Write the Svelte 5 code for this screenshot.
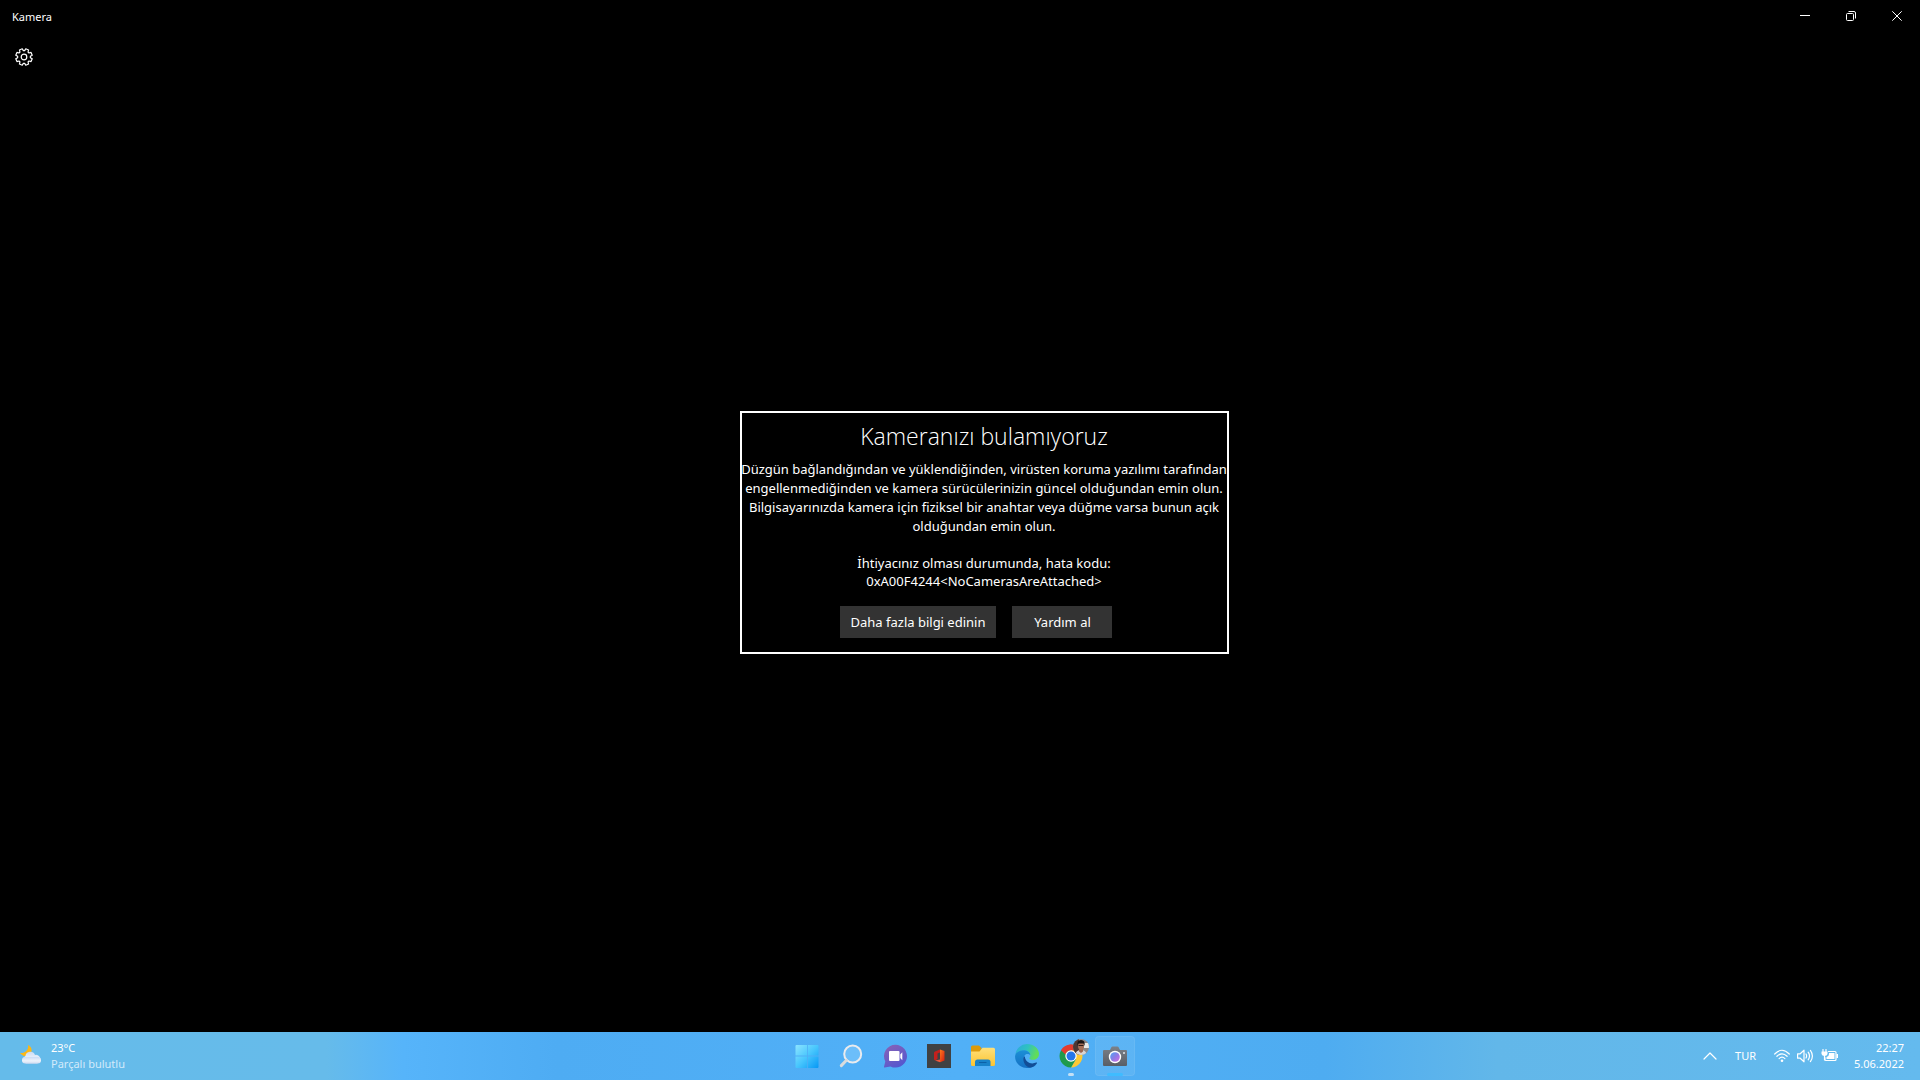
<script>
  const body = [
    'Düzgün bağlandığından ve yüklendiğinden, virüsten koruma yazılımı tarafından',
    'engellenmediğinden ve kamera sürücülerinizin güncel olduğundan emin olun.',
    'Bilgisayarınızda kamera için fiziksel bir anahtar veya düğme varsa bunun açık',
    'olduğundan emin olun.'
  ];
  const code = ['İhtiyacınız olması durumunda, hata kodu:', '0xA00F4244<NoCamerasAreAttached>'];

  // Gear outline: eight teeth, with a notch on every multiple of 45 degrees.
  const point = (radius, degrees) => {
    const a = (degrees * Math.PI) / 180;
    return `${(9 + radius * Math.cos(a)).toFixed(2)},${(9 + radius * Math.sin(a)).toFixed(2)}`;
  };
  const gear = Array.from({ length: 8 }, (_, i) => i * 45)
    .map((a) => [point(6.4, a - 6), point(6.4, a + 6), point(8.4, a + 12), point(8.4, a + 33)].join(' '))
    .join(' ');
</script>

<div class="desktop">
  <header class="titlebar">
    <h1>Kamera</h1>
    <div class="controls">
      <button aria-label="Simge durumuna küçült">
        <svg viewBox="0 0 10 10"><path d="M0 4.5h10" /></svg>
      </button>
      <button aria-label="Önceki boyut">
        <svg viewBox="0 0 10 10"><rect x=".5" y="2.5" width="7" height="7" rx="1" /><path d="M2.5.5H8Q9.5.5 9.5 2v5.5" /></svg>
      </button>
      <button aria-label="Kapat">
        <svg viewBox="0 0 10 10"><path d="M.3.3l9.4 9.4M9.7.3L.3 9.7" /></svg>
      </button>
    </div>
  </header>

  <div class="app">
    <aside>
      <button class="settings" aria-label="Ayarlar">
        <svg viewBox="0 0 18 18">
          <polygon points={gear} />
          <circle cx="9" cy="9" r="2.8" />
        </svg>
      </button>
    </aside>
    <main>
      <section class="dialog" aria-labelledby="error-title">
        <h2 id="error-title">Kameranızı bulamıyoruz</h2>
        <p>{#each body as line}<span>{line}</span>{/each}</p>
        <p>{#each code as line}<span>{line}</span>{/each}</p>
        <div class="actions">
          <button>Daha fazla bilgi edinin</button>
          <button>Yardım al</button>
        </div>
      </section>
    </main>
  </div>

  <footer class="taskbar">
    <button class="weather">
      <svg viewBox="0 0 22 22" width="22" height="22" aria-hidden="true">
        <defs><linearGradient id="cloud" x2="0" y2="1"><stop stop-color="#c9dcf5" /><stop offset=".6" stop-color="#eef3fb" /><stop offset="1" stop-color="#cfdaf0" /></linearGradient></defs>
        <path d="M8 0c5 2 5 9-1 11-3 .6-5-.5-7-3 5 .5 9-3 8-8z" fill="#fdb714" />
        <path d="M6 18.500a4 4 0 0 1-.6-7.400A5 5 0 0 1 15 10a4.300 4.300 0 0 1 2 8.500z" fill="url(#cloud)" />
        <rect x="2" y="12" width="19" height="6.500" rx="3.200" fill="url(#cloud)" />
      </svg>
      <span class="stack"><span>23°C</span><span class="dim">Parçalı bulutlu</span></span>
    </button>

    <nav aria-label="Görev çubuğu">
      <button aria-label="Başlat">
        <svg viewBox="0 0 24 24">
          <defs><linearGradient id="win" x2="1" y2="1"><stop stop-color="#8ce4ff" /><stop offset=".5" stop-color="#48c6fd" /><stop offset="1" stop-color="#0698f5" /></linearGradient></defs>
          <path d="M1.500 1H12v10.500H.5V2q0-1 1-1zM12.800 1H22.500q1 0 1 1v9.500H12.800zM.5 12.500H12V24H1.500q-1 0-1-1zM12.800 12.500h10.700V23q0 1-1 1h-9.700z" fill="url(#win)" />
        </svg>
      </button>
      <button aria-label="Ara">
        <svg viewBox="0 0 24 24">
          <circle cx="13.700" cy="10" r="8.500" fill="#8fd0ff" fill-opacity=".45" stroke="#e9ebee" stroke-width="2" />
          <path d="M7.400 16.300 2.300 21.600" stroke="#d9dbdd" stroke-width="3" stroke-linecap="round" />
        </svg>
      </button>
      <button aria-label="Sohbet">
        <svg viewBox="0 0 24 24">
          <defs><linearGradient id="chat" x2=".6" y2="1"><stop stop-color="#8b62b4" /><stop offset="1" stop-color="#5558cf" /></linearGradient></defs>
          <path d="M12.500.8a11.400 11.400 0 1 1-5 21.600L1.600 23.500Q.8 23.500 1 22.700L2.300 17.500A11.400 11.400 0 0 1 12.500.8z" fill="url(#chat)" />
          <rect x="6" y="7" width="10.500" height="10" rx="1" fill="#fff" />
          <path d="M17.300 10.500 19.300 8.200v8l-2-2.200z" fill="#fff" />
        </svg>
      </button>
      <button aria-label="Office">
        <svg viewBox="0 0 24 24">
          <defs><linearGradient id="office" x2="1" y2="1"><stop stop-color="#ff7a1c" /><stop offset="1" stop-color="#d51b12" /></linearGradient></defs>
          <path d="M0 0h24v24H0z" fill="#404142" />
          <path d="M8 7.500 13 5.500V8.500L10.500 9.500V15L8 16.500 7 15.500V8.500z" fill="#c4201d" />
          <path d="M13 5.500 17.500 7V16.500L13 18.200z" fill="url(#office)" />
          <path d="M8 16.500 13 15.500V18.200z" fill="#f0573b" />
        </svg>
      </button>
      <button aria-label="Dosya Gezgini">
        <svg viewBox="0 0 24 24">
          <defs><linearGradient id="folder" x2="0" y2="1"><stop stop-color="#ffe07a" /><stop offset="1" stop-color="#fbc432" /></linearGradient></defs>
          <path d="M0 3q0-1.500 1.500-1.500H8L10.500 4V8H0z" fill="#dc9a0b" />
          <path d="M0 7.500H8.500L11.500 3.700H22.500Q24 3.700 24 5.200V20.500Q24 22 22.500 22H1.500Q0 22 0 20.500z" fill="url(#folder)" />
          <path d="M4 22V18q0-2.500 2.500-2.500H17q2.500 0 2.500 2.500v4z" fill="#1882ca" />
          <path d="M8 18.500h7.500" stroke="#0c61a8" />
        </svg>
      </button>
      <button aria-label="Microsoft Edge">
        <svg viewBox="0 0 24 24">
          <defs>
            <linearGradient id="edge1" x2="1" y2=".3"><stop stop-color="#29a8e0" /><stop offset=".55" stop-color="#2fc2c0" /><stop offset="1" stop-color="#62dd58" /></linearGradient>
            <linearGradient id="edge2" x2="0" y2="1"><stop stop-color="#1b8fd6" /><stop offset="1" stop-color="#1470c4" /></linearGradient>
          </defs>
          <path d="M.2 11A12 12 0 0 1 12 0c7 0 12 5 12 9.700 0 4-3 6-6.200 6-2.800 0-3.800-1-3.500-1.800.5-.8 1.200-1.500 1-3C15 8 12.500 6.500 9 6.500 4 6.500 1 9 .2 11z" fill="url(#edge1)" />
          <path d="M.1 12C.5 8.500 4.500 6.300 8.500 6.300c3.500 0 6.600 1.700 6.800 4.700-1-1-3-1.600-4.700-.6-2.600 1.500-2.600 6.500 1 9.200 3 2 6.400 2.200 9.700.8C19 23 15.500 24 12 24 5 24-.3 18.500.1 12z" fill="url(#edge2)" />
          <path d="M8.400 14c-.4 4 2.100 9.300 7 9.600 3-.8 5-2.400 6.600-4.400.3-.7-.3-.9-.8-.6-5 2.200-11 0-11.400-6.300-.8.500-1.300 1-1.400 1.700z" fill="#124d96" />
        </svg>
      </button>
      <button class="running" aria-label="Google Chrome">
        <svg viewBox="0 0 24 24">
          <path d="M12 12 2.050 6.250A11.500 11.500 0 0 1 21.950 6.250z" fill="#e33b2e" />
          <path d="M12 12V6.250H21.950A11.500 11.500 0 0 1 12 23.500L17 14.900z" fill="#fcc934" />
          <path d="M12 12 2.050 6.250A11.500 11.500 0 0 0 12 23.500L17 14.900z" fill="#1e9a4b" />
          <path d="M2.050 6.250 7 14.900 12 12V6.250z" fill="#1e9a4b" />
          <path d="M2.050 6.250Q6 1 12 .5 19 .8 21.950 6.250H12Q7.500 6.500 6.500 10.500z" fill="#e33b2e" />
          <circle cx="12" cy="12" r="5.700" fill="#fff" /><circle cx="12" cy="12" r="4.500" fill="#2476ea" />
        </svg>
        <svg class="avatar" viewBox="0 0 16 16">
          <defs><clipPath id="face"><circle cx="8" cy="8" r="8" /></clipPath></defs>
          <g clip-path="url(#face)">
            <path d="M0 0h16v16H0z" fill="#8f8785" /><path d="M0 0h6v16H0z" fill="#4c3733" />
            <path d="M11 4h5v5h-5z" fill="#e9e9e7" />
            <path d="M2 16q1-5 6-5t6 5z" fill="#d9d4d2" />
            <path d="M6 9h4v3.500L8 14l-2-1.500z" fill="#9c6650" />
            <ellipse cx="8" cy="7" rx="3" ry="4" fill="#a56f58" />
            <path d="M4.500 7Q3.500 1 8 1t3.500 6L10.500 4.500h-5z" fill="#1a1414" />
            <path d="M5.500 6.500h5" stroke="#2b1c19" />
          </g>
        </svg>
      </button>
      <button class="active" aria-label="Kamera">
        <svg viewBox="0 0 24 24">
          <defs>
            <linearGradient id="cam" x2="0" y2="1"><stop stop-color="#7c8188" /><stop offset="1" stop-color="#595e66" /></linearGradient>
            <linearGradient id="lens" x2="1" y2="1"><stop stop-color="#4aa5f4" /><stop offset=".5" stop-color="#8f7be6" /><stop offset="1" stop-color="#d66be0" /></linearGradient>
          </defs>
          <path d="M7 6 8.500 3Q8.800 2.500 9.500 2.500h5q.7 0 1 .5L17 6h6q1 0 1 1v14q0 1-1 1H1q-1 0-1-1V7q0-1 1-1z" fill="url(#cam)" />
          <rect x="20" y="8" width="2" height="2" fill="#c5c9cf" />
          <circle cx="12" cy="13" r="6.200" fill="#fff" /><circle cx="12" cy="13" r="4.800" fill="url(#lens)" />
        </svg>
      </button>
    </nav>

    <div class="tray">
      <button aria-label="Gizli simgeleri göster">
        <svg width="14" height="8" viewBox="0 0 14 8"><path d="M1 7l6-6 6 6" /></svg>
      </button>
      <button class="lang">TUR</button>
      <button class="status" aria-label="Ağ, ses ve pil">
        <svg width="16" height="14" viewBox="0 0 16 14">
          <path d="M.7 5Q8-2.500 15.300 5M2.900 7.300q5.100-5 10.200 0M5.100 9.600q2.900-2.800 5.800 0" />
          <circle cx="8" cy="11.700" r="1.300" fill="#fff" stroke="none" />
        </svg>
        <svg width="17" height="14" viewBox="0 0 17 14">
          <path d="M.6 4.800H3.200L7 1.200V12.800L3.200 9.200H.6zM9 5q1.200 2 0 4M11.200 3.200q2.600 3.800 0 7.600M13.400 1.400q4 5.600 0 11.200" />
        </svg>
        <svg width="17" height="14" viewBox="0 0 17 14">
          <path d="M7.500 2.500H14q1 0 1 1v7q0 1-1 1H5q-1 0-1-1V8.500M2 .5V3M5 .5V3M3.500 6.500V11" />
          <path d="M.5 2.500h6V5Q6 7 3.500 7T.5 5zM8 4H13.500v6H5.500V8Q8 7.500 8 5zM15.500 5h1.500v4h-1.500z" fill="#fff" stroke="none" />
        </svg>
      </button>
      <button class="stack clock"><span>22:27</span><span>5.06.2022</span></button>
    </div>
  </footer>
</div>

<style>
  :global(body) { margin: 0; background: #000; }
  .desktop {
    min-height: 100vh;
    display: flex;
    flex-direction: column;
    background: #000;
    color: #fff;
    font-family: "Noto Sans", "Open Sans", sans-serif;
    font-size: 12px;
    line-height: 16px;
  }
  button {
    font: inherit;
    color: inherit;
    background: none;
    border: 0;
    padding: 0;
    display: flex;
    align-items: center;
    justify-content: center;
  }
  svg { display: block; }
  h1, h2, p { margin: 0; font-weight: 400; }
  .titlebar { height: 32px; display: flex; align-items: center; justify-content: space-between; }
  h1 { font-size: 11px; line-height: 16px; padding: 1px 0 0 12px; }
  .controls { display: flex; }
  .controls button { width: 46px; height: 32px; }
  .controls svg { width: 10px; height: 10px; fill: none; stroke: #fff; }
  .app { flex: 1; display: flex; }
  aside { width: 48px; }
  .settings { width: 48px; height: 50px; }
  .settings svg { width: 18px; height: 18px; fill: none; stroke: #fff; stroke-width: 1.2; stroke-linejoin: round; }
  main { flex: 1; display: flex; align-items: center; justify-content: center; }
  .dialog {
    box-sizing: border-box;
    width: 489px;
    padding: 7px 0 14px;
    border: 2px solid #fff;
    overflow: hidden;
    display: flex;
    flex-direction: column;
    align-items: center;
  }
  h2 { font-family: "Open Sans", sans-serif; font-size: 23px; line-height: 32px; margin-bottom: 8px; font-weight: 300; }
  p { display: flex; flex-direction: column; align-items: center; font-size: 13px; line-height: 19px; white-space: nowrap; }
  p + p { margin-top: 18px; line-height: 18px; }
  .actions { display: flex; gap: 16px; margin: 16px 16px 0 0; font-size: 13px; }
  .actions button { min-width: 100px; height: 32px; padding: 0 11px; background: #333; white-space: nowrap; }
  .taskbar {
    height: 48px;
    display: grid;
    grid-template-columns: 1fr auto 1fr;
    align-items: center;
    background: linear-gradient(90deg, #65bbea 0%, #66bbea 17%, #56b4fa 21%, #4eacf3 29%, #51b0f7 50%, #4eacf1 69%, #62b7e9 78%, #64baee 100%);
  }
  .weather { justify-self: start; gap: 9px; padding-left: 20px; }
  .stack { display: flex; flex-direction: column; align-items: flex-start; font-size: 11px; line-height: 16px; white-space: nowrap; }
  .dim { color: #d3eafa; }
  nav { display: flex; gap: 4px; padding-left: 1px; }
  nav button { position: relative; width: 40px; height: 40px; border-radius: 4px; }
  nav button > svg { width: 24px; height: 24px; }
  nav .active { background: #ffffff14; box-shadow: inset 0 0 0 1px #ffffff12; }
  nav .running::after, nav .active::after {
    content: "";
    position: absolute;
    bottom: 0;
    width: 6px;
    height: 3px;
    border-radius: 2px;
    background: #c3e0f5;
  }
  nav .active::after { width: 16px; background: #3fbcff; }
  nav .avatar { position: absolute; top: 3px; right: 2px; width: 16px; height: 16px; }
  .tray { justify-self: end; display: flex; align-items: center; padding-right: 16px; }
  .tray svg { fill: none; stroke: #fff; stroke-width: 1.2; stroke-linejoin: round; stroke-linecap: round; }
  .lang { margin: 0 18px; font-size: 11px; }
  .status { gap: 7px; margin-right: 16px; }
  .clock { align-items: flex-end; }
</style>
